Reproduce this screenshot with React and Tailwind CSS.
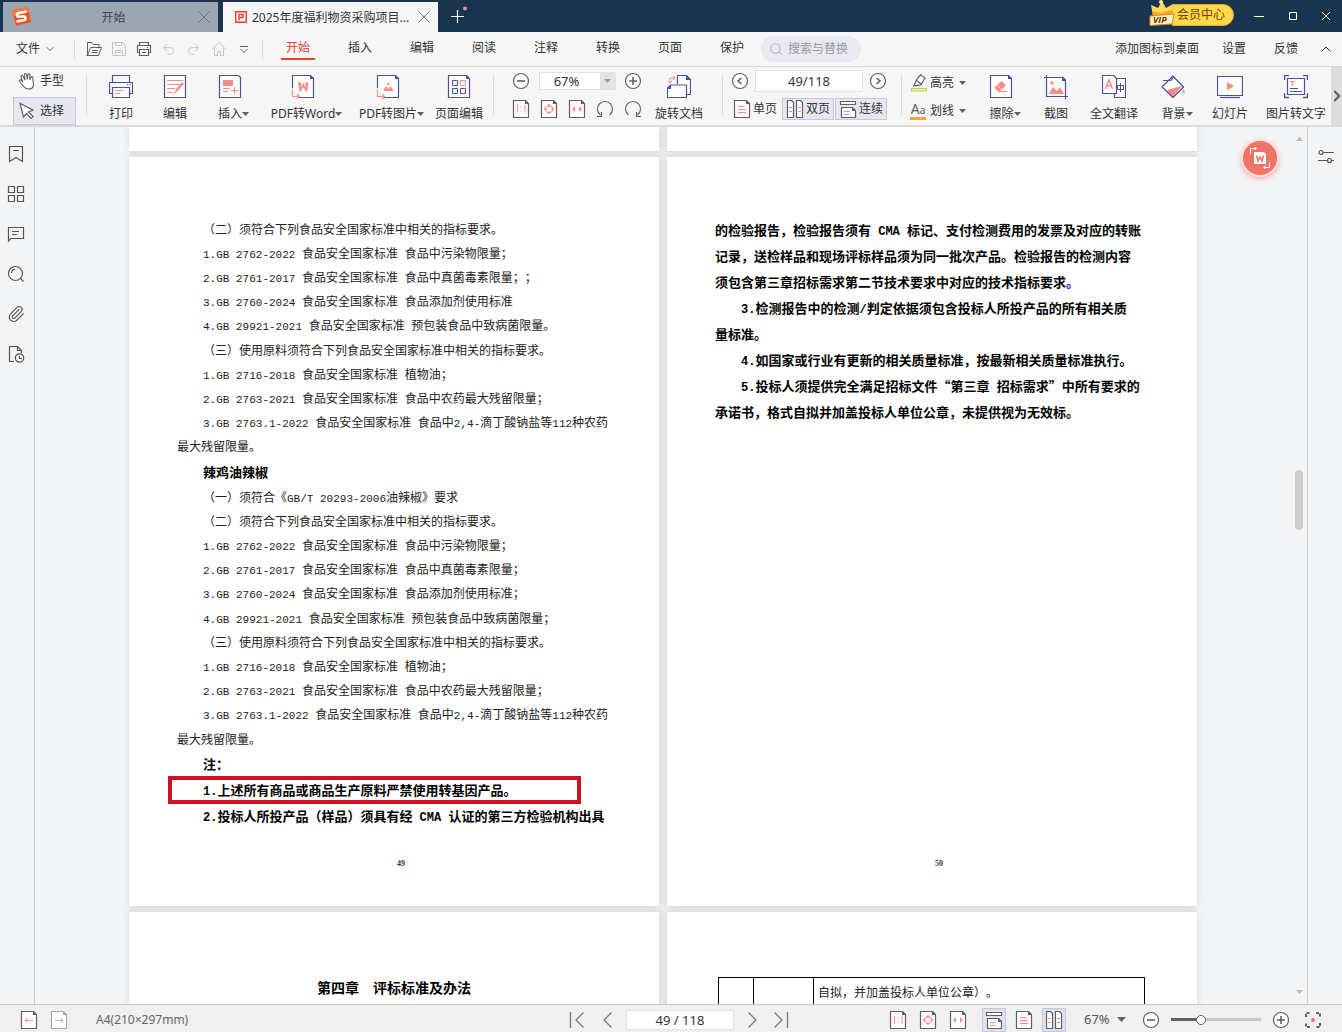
import { ChevronDown, ChevronUp, ChevronRight, Undo2, Redo2, House, Search, Paperclip } from 'lucide-react';
import clsx from 'clsx';

const INDIGO = '#4a5399';
const CORAL = '#ff8a84';
const GRAY = '#606060';

function Icon({ size = 24, className, children, ...props }) {
  return (
    <svg
      width={size}
      height={size}
      viewBox={`0 0 ${size} ${size}`}
      fill="none"
      stroke={INDIGO}
      aria-hidden="true"
      className={clsx('shrink-0', className)}
      {...props}
    >
      {children}
    </svg>
  );
}

function Caret({ className = 'text-[#606060]' }) {
  return (
    <svg width="7" height="4" viewBox="0 0 7 4" fill="currentColor" aria-hidden="true" className={clsx('shrink-0', className)}>
      <path d="M0 0h7L3.5 4z" />
    </svg>
  );
}

function Separator({ className }) {
  return <div className={clsx('w-px shrink-0 bg-[#dcdcdc]', className)} />;
}

/* ---------- big ribbon icons ---------- */

const PrintIcon = () => (
  <Icon>
    <path d="M3.5 7.5V.5h17v7M3.5 18.5H.5v-11h23v11h-3" strokeWidth="1.2" />
    <path d="M3.5 12.5h17v10h-17z" fill="#fff" strokeWidth="1.2" />
    <path d="M6 15.5h8M6 18.5h5" stroke={CORAL} />
    <path d="M18 9.5h1M20.5 9.5h1" />
  </Icon>
);

const EditIcon = () => (
  <Icon>
    <path d="M1.5.5h21v22h-21z" fill="#fff" strokeWidth="1.2" />
    <path d="M4 5.5h16M4 9.5h13M4 13.5h8M4 17.5h5" stroke={CORAL} strokeWidth="1.2" />
    <path d="M20 8l-7 8" stroke={CORAL} strokeWidth="2.4" />
    <path d="M10.5 19l1-3 2 1.5z" fill={CORAL} stroke="none" />
  </Icon>
);

const InsertIcon = () => (
  <Icon>
    <path d="M1.5.5h19l2 2v20h-21z" fill="#fff" strokeWidth="1.2" />
    <path d="M5 5h10v6H5z" fill={CORAL} stroke="none" />
    <path d="M5 13.5h7M5 16.5h5M13 15.5h7M16.5 12v7" stroke={CORAL} />
  </Icon>
);

const PdfPage = ({ children }) => (
  <Icon>
    <path d="M1.5 13V.5h18l3 3v19H8" fill="#fff" strokeWidth="1.2" />
    <path d="M19 0v4h4z" fill={INDIGO} stroke="none" />
    <path d="M1.5 15v6.5h6M6 19l2.5 2.500L6 24" stroke={CORAL} strokeWidth="1.2" />
    {children}
  </Icon>
);

const ToWordIcon = () => (
  <PdfPage>
    <path d="M7 8.5h3.500M14 8.5h3.500M8.500 9l.8 6 3-5 3 5 .8-6" stroke={CORAL} strokeWidth="2" />
  </PdfPage>
);

const ToImageIcon = () => (
  <PdfPage>
    <path d="M7 16l3-5 2.500 3 2-3 3.500 5z" fill={CORAL} stroke="none" />
    <circle cx="12.5" cy="9" r="1.3" fill={CORAL} stroke="none" />
  </PdfPage>
);

const PageEditIcon = () => (
  <Icon>
    <path d="M1.5.5h18l3 3v19h-21z" fill="#fff" strokeWidth="1.2" />
    <path d="M19 0v4h4z" fill={INDIGO} stroke="none" />
    <path d="M5.5 5.500h5v5h-5zM5.500 13.500h5v5h-5zM13.500 13.500h5v5h-5z" />
    <path d="M13.5 5.500h5v5h-5z" stroke={CORAL} />
  </Icon>
);

const RotateDocIcon = () => (
  <Icon>
    <path d="M10.5 9V.5h9l4 4v15h-4" fill="#fff" strokeWidth="1.2" />
    <path d="M19 0v5h5z" fill={INDIGO} stroke="none" />
    <path d="M.5 13l3-3h16v12.500H.5z" fill="#fff" strokeWidth="1.2" />
    <path d="M0 14l4-4v4z" fill={INDIGO} stroke="none" />
    <path d="M3 8V3h5M1 6l2 2 2-2M6 1l2 2-2 2" stroke={CORAL} />
  </Icon>
);

const EraseIcon = () => (
  <Icon>
    <path d="M1.5.5h18l3 3v19h-21z" fill="#fff" strokeWidth="1.2" />
    <path d="M19 0v4h4z" fill={INDIGO} stroke="none" />
    <path d="M6 12l6.500-6 4.500 4.500-6.500 6H9l-3-3z" fill={CORAL} stroke="none" />
    <path d="M9 11l3.500 3.500" stroke="#fff" />
    <path d="M9 16.500h9" stroke={CORAL} />
  </Icon>
);

const CropIcon = () => (
  <Icon>
    <path d="M3.5 3.500h15l2 2v15h-17z" fill="#fff" stroke="none" />
    <path d="M0 2.500h19l2.500 2.500M2.500 0v21.500H24M21.500 4v20" strokeWidth="1.2" />
    <path d="M18 2v4h4z" fill={INDIGO} stroke="none" />
    <path d="M5 19l4-7 4 4 3-4 4 7z" fill={CORAL} stroke="none" />
    <circle cx="8" cy="8" r="1.8" fill={CORAL} stroke="none" />
  </Icon>
);

const TranslateIcon = () => (
  <Icon>
    <path d="M12.5 3.500h11v19h-11z" fill="#fff" strokeWidth="1.2" />
    <path d="M.5.5h11l3 3v15H.5z" fill="#fff" strokeWidth="1.2" />
    <path d="M3.5 14L7 4.500l3.500 9.500M5 11h4.500" stroke={CORAL} strokeWidth="1.4" />
    <path d="M15.5 10.500h6v4h-6zM18.500 8v9" />
  </Icon>
);

const BackgroundIcon = () => (
  <Icon>
    <path d="M12 1L1 12l11 10.500L22.500 12z" fill="#fff" />
    <path d="M6 15l15-4-9.500 11z" fill={CORAL} stroke="none" />
    <path d="M12 1L1 12l11 10.500L22.500 12zM2 5.500h8M10 5.500l3-4" strokeWidth="1.2" />
    <path d="M22.500 14c2 3 1 4 0 4s-1.500-1 0-4z" fill={CORAL} stroke="none" />
  </Icon>
);

const SlideIcon = () => (
  <Icon size={26}>
    <path d="M.5 2.500h25v19H.5z" fill="#fff" strokeWidth="1.2" />
    <path d="M10 8l7 4-7 4.500z" fill={CORAL} stroke="none" />
    <path d="M3 23.500h20" strokeWidth="1.2" />
  </Icon>
);

const OcrIcon = () => (
  <Icon>
    <path d="M.5 5V.5H5M19 .5h4.500V5M23.500 18v4.500H19M5 22.500H.5V18" strokeWidth="1.4" />
    <path d="M3.5 3.500h17v16h-17z" fill="#fff" strokeWidth="1.2" />
    <path d="M6 6.500h5M8.500 6.500V11" stroke={CORAL} strokeWidth="1.2" />
    <path d="M6 13.500h8M6 16.500h12" />
  </Icon>
);

/* ---------- small page icons ---------- */

function PageIcon({ muted, children }) {
  const line = muted ? '#a8a8a8' : GRAY;
  return (
    <Icon size={18} stroke={line}>
      <path d="M1.5.5h12l3 3v14h-15z" fill="#fff" strokeWidth="1.2" />
      <path d="M13 0v4h4z" fill={line} stroke="none" />
      {children}
    </Icon>
  );
}

const ActualSizeIcon = () => (
  <PageIcon>
    <path d="M4.5 6.500l1-1v7M12 6.500l1-1v7M9 7v1M9 10.500v1" stroke={CORAL} />
  </PageIcon>
);

const FitPageIcon = () => (
  <PageIcon>
    <path d="M9 3.500L11 6H7zM9 14.500L7 12h4zM3.500 9L6 7v4zM14.500 9L12 11V7z" fill={CORAL} stroke="none" />
    <path d="M6 6.500h6v5.500H6z" stroke={CORAL} strokeWidth=".8" />
  </PageIcon>
);

const FitWidthIcon = () => (
  <PageIcon>
    <path d="M4 9l3-3v6zM14 9l-3-3v6z" fill={CORAL} stroke="none" />
  </PageIcon>
);

const SinglePageIcon = () => (
  <PageIcon>
    <path d="M5 6.500h6M5 9.500h8M5 12.500h8" stroke={CORAL} />
  </PageIcon>
);

const DoublePageIcon = () => (
  <Icon size={18} stroke={GRAY} strokeWidth="1.2">
    <path d="M1.5.5h4l2 2v15h-6zM10.500.5h4l2 2v15h-6z" fill="#fff" />
    <path d="M3 7.500h3M3 11.500h3M12 7.500h3M12 11.500h3" stroke={CORAL} />
  </Icon>
);

const ContinuousIcon = () => (
  <Icon size={18} stroke={GRAY} strokeWidth="1.2">
    <path d="M1.5 1.500h15v3h-15z" fill="#fff" />
    <path d="M2.500 17.500v-10h11l3 3v7z" fill="#fff" />
    <path d="M13 7v4h4z" fill={GRAY} stroke="none" />
    <path d="M5 11.500h6M5 14.500h5" stroke={CORAL} />
  </Icon>
);

const RotateIcon = ({ className }) => (
  <Icon size={18} stroke={GRAY} className={className}>
    <path d="M4.500 15A7.500 7.500 0 1 1 13.500 15" strokeWidth="1.2" />
    <path d="M1 16.500h4.500V12" strokeWidth="1.2" />
  </Icon>
);

const CircleIcon = ({ d }) => (
  <Icon size={18} stroke={GRAY}>
    <circle cx="9" cy="9" r="7.5" fill="#fff" strokeWidth="1.2" />
    <path d={d} strokeWidth="1.6" />
  </Icon>
);

const MINUS = 'M5 9h8';
const PLUS = 'M5 9h8M9 5v8';

const HandIcon = () => (
  <Icon size={18} stroke={GRAY}>
    <path d="M6 15L1.500 9.500c-.8-1.500 1-2.300 2-1L5 10 3 5c-.4-1.500 1.500-2 2-.7L7 8 6.300 2.800c0-1.600 2-1.700 2.200-.2L9.300 7.500l.6-4.700c.3-1.400 2-1.200 2 .2L11.700 8l1.400-2.800c.8-1 2-.4 1.800.8-.6 3 1.500 5.500.5 8-.6 1.800-2.400 3.200-5 3-2 0-3.300-1-4.400-2z" fill="#fff" strokeWidth="1.1" />
  </Icon>
);

const CursorIcon = () => (
  <Icon size={18} stroke={GRAY}>
    <path d="M2 1.500l3.500 13.500 3-3.500 4.500 5 2-2-4.500-4.500L15 8z" fill="#fff" strokeWidth="1.2" />
  </Icon>
);

const HighlightIcon = () => (
  <Icon size={18} stroke={GRAY}>
    <path d="M10.500.8l4.500 3-4 7-5.500 1-1-1.500 2-4.500zM6.500 6.500l4.500 3.500M5 11l-2 1.500" fill="#fff" strokeWidth="1.1" />
    <path d="M1.500 14.500h15v2.500h-15z" fill="#ffff3c" stroke="#999" strokeWidth=".6" />
  </Icon>
);

/* ---------- ribbon ---------- */

function BigButton({ icon, label, width, menu }) {
  return (
    <button className={clsx('flex shrink-0 flex-col items-center pt-2', width)}>
      <span className={clsx('flex h-6 items-center', menu && 'mr-2')}>{icon}</span>
      <span className="mt-[7px] flex items-center whitespace-nowrap leading-4">
        {label}
        {menu && <Caret />}
      </span>
    </button>
  );
}

function IconButton({ label, className, children }) {
  return (
    <button aria-label={label} className={clsx('flex shrink-0 items-center justify-center', className)}>
      {children}
    </button>
  );
}

function ToggleButton({ icon, label, active }) {
  return (
    <button
      className={clsx(
        'flex h-[22px] items-center gap-0.5 border px-[3px] leading-4',
        active ? 'border-[#c5c6df] bg-[#e6e7f1]' : 'border-transparent'
      )}
    >
      {icon}
      {label}
    </button>
  );
}

function TitleBar() {
  return (
    <header className="flex h-8 shrink-0 bg-[#1a3450] pl-[3px] pt-0.5">
      <div className="flex w-[215px] items-center bg-[#9ca6b2] pl-2 pr-1 text-[#444]">
        <svg width="22" height="22" viewBox="0 0 22 22" aria-hidden="true">
          <path d="M1 4L17 1l3 15-15 4z" fill="#f4511e" />
          <path d="M1 4L17 1l1 5L2 10z" fill="#fb7a3c" />
          <path d="M15.500 5.500L8 7c-3 .7-2.500 4 0 3.700l4-.5c3-.3 3.200 3.500.5 4L5.500 15.500" fill="none" stroke="#fff" strokeWidth="2.6" />
        </svg>
        <button className="flex-1 pt-0.5">开始</button>
        <IconButton label="关闭开始" className="w-5">
          <Icon size={12} stroke="#6d7680"><path d="M.5.5l11 11M11.500.5l-11 11" /></Icon>
        </IconButton>
      </div>
      <div className="ml-[5px] flex w-[215px] items-center bg-[#f6f6f6] pl-3 text-[#333]">
        <Icon size={12} stroke="#e8412f" strokeWidth="1.4">
          <path d="M.7.7h10.600v10.600H.7zM4 9.500v-6h4v3H4" />
        </Icon>
        <button className="ml-[5px] whitespace-nowrap pt-0.5">2025年度福利物资采购项目...</button>
        <IconButton label="关闭文档" className="ml-auto w-7">
          <Icon size={12} stroke="#777"><path d="M.5.5l11 11M11.500.5l-11 11" /></Icon>
        </IconButton>
      </div>
      <IconButton label="新建标签" className="ml-3 w-[18px] pb-1">
        <Icon size={18} stroke="#fff">
          <path d="M1 10.500h13M7.500 4v13" strokeWidth="1.2" />
          <circle cx="15" cy="2.5" r="2" fill={CORAL} stroke="none" />
        </Icon>
      </IconButton>
      <button className="-mt-0.5 ml-auto flex h-[26px] items-end text-[#7a3b00]">
        <svg width="28" height="26" viewBox="0 0 28 26" className="z-10 -mr-1" aria-hidden="true">
          <path d="M5 16L3 5l7 3 4-7 4 7 7-4-1 12z" fill="#ffd75a" />
          <path d="M5 16L4 11l9 2 11-3v6z" fill="#f3a82c" />
          <circle cx="13" cy="2" r="2" fill="#ffe9a0" />
          <path d="M2 16l24-2-2 10-22 1.500z" fill="#fff0c0" stroke="#d98a1c" />
          <text x="5" y="23" fontSize="9" fontWeight="700" fontStyle="italic" fontFamily="Open Sans" fill="#7a2d00">VIP</text>
        </svg>
        <span className="flex h-[22px] items-center rounded-r-full border border-[#e9ae25] bg-[#ffd84c] pl-1 pr-2">会员中心</span>
      </button>
      <div className="ml-2 flex">
        <IconButton label="最小化" className="w-[34px]">
          <Icon size={12} stroke="#fff"><path d="M1 5.500h10" /></Icon>
        </IconButton>
        <IconButton label="最大化" className="w-[34px]">
          <Icon size={12} stroke="#fff"><path d="M2.500 1.500h7v7h-7z" /></Icon>
        </IconButton>
        <IconButton label="关闭" className="w-8">
          <Icon size={12} stroke="#fff"><path d="M2 1l8 8M10 1L2 9" /></Icon>
        </IconButton>
      </div>
    </header>
  );
}

const MENU = ['开始', '插入', '编辑', '阅读', '注释', '转换', '页面', '保护'];

function MenuBar() {
  return (
    <nav className="flex h-[34px] shrink-0 items-center bg-[#f6f6f6]">
      <button className="ml-4 flex items-center gap-1">
        文件 <ChevronDown className="size-3" strokeWidth={1.5} />
      </button>
      <Separator className="ml-[18px] h-5" />
      <div className="ml-1.5 flex text-[#606060]">
        <IconButton label="打开" className="w-[25px]">
          <Icon size={16} stroke={GRAY}>
            <path d="M1.500 14V1.500H6L7.500 3.500h5.500V6M.5 14.500h12l3-8h-11l-3 8M6 9.500h6M5.500 11.500h6" />
          </Icon>
        </IconButton>
        <IconButton label="保存" className="w-[25px]">
          <Icon size={16} stroke="#c6c6c6">
            <path d="M1.500 1.500h10l3 3v10h-13zM4.500 1.500v3h6v-3M4.500 14V9.500h7V14M6 11.500h4" />
          </Icon>
        </IconButton>
        <IconButton label="打印" className="w-[25px]">
          <Icon size={16} stroke={GRAY} strokeWidth="1.2">
            <path d="M3.500 4.500v-3h9v3M3.500 11.500h-2v-7h13v7h-2M3.500 8.500h9v6h-9zM6 11.500h4M11 6.500h1" />
          </Icon>
        </IconButton>
        <IconButton label="撤销" className="w-[25px]"><Undo2 className="size-[15px] text-[#c6c6c6]" strokeWidth={1.5} /></IconButton>
        <IconButton label="重做" className="w-[25px]"><Redo2 className="size-[15px] text-[#c6c6c6]" strokeWidth={1.5} /></IconButton>
        <IconButton label="主页" className="w-[25px]">
          <Icon size={16} stroke="#c6c6c6">
            <path d="M1 8.500L8 1.500l7 7M3.500 7v7.500h3v-4h3v4h3V7" />
          </Icon>
        </IconButton>
        <IconButton label="更多" className="w-[25px]">
          <Icon size={10} stroke={GRAY}><path d="M1 2.500h8M1.500 5L5 8.500 8.500 5" /></Icon>
        </IconButton>
      </div>
      <Separator className="ml-1.5 h-5" />
      <div className="ml-1 flex">
        {MENU.map((name, i) => (
          <button
            key={name}
            className={clsx('flex w-[62px] flex-col items-center leading-5', i === 0 && 'text-[#e8412f]')}
          >
            {name}
            <span className={clsx('h-0.5 w-[34px]', i === 0 ? 'bg-[#e8412f]' : 'bg-transparent')} />
          </button>
        ))}
      </div>
      <label className="-ml-0.5 flex h-[26px] w-[100px] items-center rounded-full bg-[#e8e9f2] pl-2 text-[#999]">
        <Search className="size-3.5 shrink-0 text-[#bbb]" strokeWidth={2} />
        <input aria-label="搜索与替换" placeholder="搜索与替换" className="ml-[5px] w-[68px] bg-transparent outline-none placeholder:text-[#999]" />
      </label>
      <div className="ml-auto flex items-center">
        <button>添加图标到桌面</button>
        <button className="ml-[23px]">设置</button>
        <button className="ml-7">反馈</button>
        <IconButton label="收起功能区" className="ml-5 mr-2 w-4"><ChevronUp className="size-4" strokeWidth={1.5} /></IconButton>
      </div>
    </nav>
  );
}

function Ribbon() {
  return (
    <section className="flex h-[61px] shrink-0 border-b-2 border-t border-b-[#dadada] border-t-[#d9d9d9] bg-[#f6f6f6]">
      <div className="ml-[13px] mr-2.5 flex w-[63px] flex-col gap-0.5">
        <button className="flex h-7 items-center gap-1 pl-[5px]"><HandIcon />手型</button>
        <button className="flex h-7 items-center gap-1 border border-[#c5c6df] bg-[#e6e7f1] pl-1"><CursorIcon />选择</button>
      </div>
      <Separator className="mr-[7px] mt-2 h-10" />
      <BigButton width="w-[54px]" icon={<PrintIcon />} label="打印" />
      <BigButton width="w-[54px]" icon={<EditIcon />} label="编辑" />
      <BigButton width="w-[63px]" icon={<InsertIcon />} label="插入" menu />
      <BigButton width="w-[83px]" icon={<ToWordIcon />} label="PDF转Word" menu />
      <BigButton width="w-[87px]" icon={<ToImageIcon />} label="PDF转图片" menu />
      <BigButton width="w-[48px]" icon={<PageEditIcon />} label="页面编辑" />
      <Separator className="ml-2.5 mr-[18px] mt-2 h-10" />

      <div className="flex w-[130px] shrink-0 flex-col gap-2.5 pt-[5px]">
        <div className="flex items-center justify-between">
          <IconButton label="缩小" className="w-[18px]"><CircleIcon d={MINUS} /></IconButton>
          <div className="flex h-[18px] items-stretch border border-[#e2e2e2]">
            <select aria-label="缩放比例" defaultValue="67%" className="w-[60px] appearance-none bg-white pr-1.5 text-center text-[13px] leading-4 outline-none">
              <option>67%</option>
              <option>100%</option>
            </select>
            <span className="flex w-[15px] items-center justify-center bg-[#e2e2e2]"><Caret className="text-[#999]" /></span>
          </div>
          <IconButton label="放大" className="w-[18px]"><CircleIcon d={PLUS} /></IconButton>
        </div>
        <div className="flex items-center justify-between">
          <IconButton label="实际大小"><ActualSizeIcon /></IconButton>
          <IconButton label="适合页面"><FitPageIcon /></IconButton>
          <IconButton label="适合宽度"><FitWidthIcon /></IconButton>
          <IconButton label="向左旋转"><RotateIcon /></IconButton>
          <IconButton label="向右旋转"><RotateIcon className="-scale-x-100" /></IconButton>
        </div>
      </div>
      <BigButton width="ml-[13px] w-[48px]" icon={<RotateDocIcon />} label="旋转文档" />
      <Separator className="ml-[19px] mt-2 h-10" />

      <div className="ml-2 flex w-[156px] shrink-0 flex-col gap-1.5 pt-[3px]">
        <div className="flex items-center justify-between">
          <IconButton label="上一页"><CircleIcon d="M10.500 6L7 9l3.500 3" /></IconButton>
          <input aria-label="页码" defaultValue="49/118" className="h-[22px] w-[108px] border border-[#e2e2e2] bg-white text-center text-[13px] outline-none" />
          <IconButton label="下一页"><CircleIcon d="M7.500 6L11 9l-3.500 3" /></IconButton>
        </div>
        <div className="-ml-0.5 flex justify-between">
          <ToggleButton icon={<SinglePageIcon />} label="单页" />
          <ToggleButton icon={<DoublePageIcon />} label="双页" active />
          <ToggleButton icon={<ContinuousIcon />} label="连续" active />
        </div>
      </div>
      <Separator className="ml-3.5 mt-2 h-10" />

      <div className="ml-2 flex w-[65px] shrink-0 flex-col gap-2 pt-1.5">
        <button className="flex h-5 items-center"><HighlightIcon /><span className="ml-0.5 mr-[5px]">高亮</span><Caret /></button>
        <button className="flex h-5 items-center">
          <span className="mr-1 w-4 border-b-[3px] border-[#f9a13a] text-[14px] leading-[14px] text-[#606060]" aria-hidden="true">
            A<span className="text-[10px]">a</span>
          </span>
          <span className="mr-[5px]">划线</span><Caret />
        </button>
      </div>
      <BigButton width="w-[60px]" icon={<EraseIcon />} label="擦除" menu />
      <BigButton width="w-[42px]" icon={<CropIcon />} label="截图" />
      <BigButton width="w-[74px]" icon={<TranslateIcon />} label="全文翻译" />
      <BigButton width="w-[52px]" icon={<BackgroundIcon />} label="背景" menu />
      <BigButton width="w-[54px]" icon={<SlideIcon />} label="幻灯片" />
      <BigButton width="ml-1 w-[70px]" icon={<OcrIcon />} label="图片转文字" />
      <IconButton label="更多功能" className="ml-auto w-[11px] shrink bg-[#dcdcdc]">
        <ChevronRight className="size-[18px] shrink-0 text-[#555]" strokeWidth={2.5} />
      </IconButton>
    </section>
  );
}

/* ---------- side bars ---------- */

function LeftBar() {
  return (
    <aside className="flex w-[35px] shrink-0 flex-col items-center gap-[22px] border-r border-[#c8cacc] pr-[3px] pt-[18px]">
      <IconButton label="书签">
        <Icon size={18} stroke="#555" strokeWidth="1.2"><path d="M2.500 1.500h13v15L9 12.500l-6.500 4zM6 5.500h6" /></Icon>
      </IconButton>
      <IconButton label="缩略图">
        <Icon size={18} stroke="#555" strokeWidth="1.2"><path d="M1.500 1.500h6v6h-6zM10.500 1.500h6v6h-6zM1.500 10.500h6v6h-6zM10.500 10.500h6v6h-6z" /></Icon>
      </IconButton>
      <IconButton label="批注">
        <Icon size={18} stroke="#555" strokeWidth="1.2"><path d="M1.500 2.500h15v11H4l-2.500 2.500zM5 6.500h7M5 9.500h5" /></Icon>
      </IconButton>
      <IconButton label="查找">
        <Icon size={18} stroke="#555" strokeWidth="1.2"><circle cx="8.5" cy="8.5" r="7" /><path d="M13.500 13.500l3 3M4.500 8c0-2 1-3.500 3.500-4" /></Icon>
      </IconButton>
      <IconButton label="附件"><Paperclip className="size-[18px] text-[#555]" strokeWidth={1.5} /></IconButton>
      <IconButton label="历史">
        <Icon size={18} stroke="#555" strokeWidth="1.2">
          <path d="M7 16.500H2.500v-15h8l4 4V8M10.500 1.500v4h4" />
          <circle cx="12.5" cy="13" r="4.2" />
          <path d="M12.500 11v2.500H15" />
        </Icon>
      </IconButton>
    </aside>
  );
}

function ScrollBar() {
  return (
    <div className="flex w-4 shrink-0 flex-col items-center pb-2.5 pt-2.5 text-[#b8b8b8]">
      <Caret className="rotate-180 text-[#b8b8b8]" />
      <div className="flex-[328]" />
      <div className="h-[60px] w-2 rounded-full bg-[#cdcdcd]" />
      <div className="flex-[458]" />
      <Caret className="text-[#b8b8b8]" />
    </div>
  );
}

/* ---------- document ---------- */

// half-width runs are set in the mono face, about half the CJK advance
function Mixed({ text, bold }) {
  return text.split(/([\x20-\x7e]+)/).map((part, i) =>
    i % 2 ? (
      <span key={i} className={clsx('whitespace-pre font-["Liberation_Mono",monospace] leading-none', bold ? 'text-[12px]' : 'text-[11px]')}>
        {part}
      </span>
    ) : (
      part
    )
  );
}

function Line({ children, flush, gap }) {
  return (
    <p className={clsx('h-6 whitespace-nowrap text-[12px] leading-6 text-[#222]', !flush && 'pl-[26px]', gap && 'mt-px')}>
      <Mixed text={children} />
    </p>
  );
}

function BoldLine({ children, flush, gap }) {
  return (
    <p className={clsx('h-[26px] whitespace-nowrap text-[13px] font-bold leading-[26px] text-black', !flush && 'pl-[26px]', gap && 'mt-px')}>
      <Mixed text={children} bold />
    </p>
  );
}

function Page({ className, children }) {
  return (
    <article
      className={clsx(
        'w-[530px] shrink-0 bg-white px-12 font-["Noto_Sans_CJK_SC",sans-serif] shadow-[0_0_8px_rgba(0,0,0,0.1)] [text-spacing-trim:space-all]',
        className
      )}
    >
      {children}
    </article>
  );
}

function PageNumber({ children, className }) {
  return (
    <p className={clsx('pl-3.5 text-center font-["Liberation_Serif",serif] text-[8px] font-bold leading-3 text-[#1f3864]', className)}>
      {children}
    </p>
  );
}

function Page49() {
  return (
    <Page className="h-[749px] pt-[60px]">
      <Line>（二）须符合下列食品安全国家标准中相关的指标要求。</Line>
      <Line>1.GB 2762-2022 食品安全国家标准 食品中污染物限量；</Line>
      <Line>2.GB 2761-2017 食品安全国家标准 食品中真菌毒素限量；；</Line>
      <Line>3.GB 2760-2024 食品安全国家标准 食品添加剂使用标准</Line>
      <Line>4.GB 29921-2021 食品安全国家标准 预包装食品中致病菌限量。</Line>
      <Line gap>（三）使用原料须符合下列食品安全国家标准中相关的指标要求。</Line>
      <Line>1.GB 2716-2018 食品安全国家标准 植物油；</Line>
      <Line>2.GB 2763-2021 食品安全国家标准 食品中农药最大残留限量；</Line>
      <Line>3.GB 2763.1-2022 食品安全国家标准 食品中2,4-滴丁酸钠盐等112种农药</Line>
      <Line flush>最大残留限量。</Line>
      <BoldLine gap>辣鸡油辣椒</BoldLine>
      <Line>（一）须符合《GB/T 20293-2006油辣椒》要求</Line>
      <Line>（二）须符合下列食品安全国家标准中相关的指标要求。</Line>
      <Line>1.GB 2762-2022 食品安全国家标准 食品中污染物限量；</Line>
      <Line>2.GB 2761-2017 食品安全国家标准 食品中真菌毒素限量；</Line>
      <Line>3.GB 2760-2024 食品安全国家标准 食品添加剂使用标准；</Line>
      <Line gap>4.GB 29921-2021 食品安全国家标准 预包装食品中致病菌限量；</Line>
      <Line>（三）使用原料须符合下列食品安全国家标准中相关的指标要求。</Line>
      <Line>1.GB 2716-2018 食品安全国家标准 植物油；</Line>
      <Line>2.GB 2763-2021 食品安全国家标准 食品中农药最大残留限量；</Line>
      <Line>3.GB 2763.1-2022 食品安全国家标准 食品中2,4-滴丁酸钠盐等112种农药</Line>
      <Line flush gap>最大残留限量。</Line>
      <BoldLine>注：</BoldLine>
      <div className="relative">
        <BoldLine>1.上述所有商品或商品生产原料严禁使用转基因产品。</BoldLine>
        <div className="absolute -left-[9px] -top-px h-7 w-[413px] border-4 border-[#cc1122]" />
      </div>
      <BoldLine>2.投标人所投产品（样品）须具有经 CMA 认证的第三方检验机构出具</BoldLine>
      <PageNumber className="mt-[29px]">49</PageNumber>
    </Page>
  );
}

function Page50() {
  return (
    <Page className="flex h-[749px] flex-col pb-9 pt-[60px]">
      <BoldLine flush>的检验报告，检验报告须有 CMA 标记、支付检测费用的发票及对应的转账</BoldLine>
      <BoldLine flush>记录，送检样品和现场评标样品须为同一批次产品。检验报告的检测内容</BoldLine>
      <p className="h-[26px] whitespace-nowrap text-[13px] font-bold leading-[26px] text-black">
        须包含第三章招标需求第二节技术要求中对应的技术指标要求<span className="text-[#0000ff]">。</span>
      </p>
      <BoldLine>3.检测报告中的检测/判定依据须包含投标人所投产品的所有相关质</BoldLine>
      <BoldLine flush>量标准。</BoldLine>
      <BoldLine>4.如国家或行业有更新的相关质量标准，按最新相关质量标准执行。</BoldLine>
      <BoldLine>5.投标人须提供完全满足招标文件“第三章 招标需求”中所有要求的</BoldLine>
      <BoldLine flush>承诺书，格式自拟并加盖投标人单位公章，未提供视为无效标。</BoldLine>
      <PageNumber className="mt-auto">50</PageNumber>
    </Page>
  );
}

function Viewer() {
  return (
    <main className="relative flex min-w-0 flex-1 justify-end bg-[#f3f4f6]">
      <div className="flex min-w-0 flex-1 flex-col items-center overflow-hidden">
        <div className="flex flex-col gap-1.5 bg-[#eceeee]">
          <div className="flex gap-2">
            <Page className="h-6" />
            <Page className="h-6" />
          </div>
          <div className="flex gap-2">
            <Page49 />
            <Page50 />
          </div>
          <div className="flex gap-2">
            <Page className="h-[749px] pt-[62px]">
              <h2 className="text-center text-[14px] font-bold leading-[26px] text-black">第四章　评标标准及办法</h2>
            </Page>
            <Page className="h-[749px] pt-[65px]">
              <table className="ml-[3px] w-[427px] table-fixed border-collapse text-[12px] leading-6 text-[#222]">
                <tbody>
                  <tr className="h-20 align-top">
                    <td className="w-[35px] border border-black" />
                    <td className="w-[60px] border border-black" />
                    <td className="border border-black pl-1 pt-0.5">自拟，并加盖投标人单位公章）。</td>
                  </tr>
                </tbody>
              </table>
            </Page>
          </div>
        </div>
      </div>
      <ScrollBar />
      <button
        aria-label="PDF转Word"
        className="absolute right-7 top-3 flex size-[38px] items-center justify-center rounded-full border-2 border-[#ffdedb] bg-[#ef7468] shadow-[0_2px_4px_rgba(239,116,104,0.5)]"
      >
        <Icon size={22} stroke="#fff">
          <path d="M1.500 7V1.500H7M5.500 0l2 1.500-2 1.500M20.500 15v5.500H15M16.500 19l-2 1.500 2 1.500" />
          <path d="M5 5h10l2 2v10H5z" fill="#fff" stroke="none" />
          <path d="M7.500 8.500l1.500 5.500 2-4 2 4 1.500-5.500" stroke="#ef7468" strokeWidth="1.6" />
        </Icon>
      </button>
    </main>
  );
}

/* ---------- status bar ---------- */

function NavIcon({ d }) {
  return <Icon size={18} stroke="#777" strokeWidth="1.3"><path d={d} /></Icon>;
}

function StatusBar() {
  return (
    <footer className="flex h-7 shrink-0 items-center border-t border-[#c8c8c8] bg-[#f0f0f0] pt-0.5 text-[#555]">
      <div className="flex flex-1 items-center pl-5">
        <IconButton label="后退">
          <PageIcon><path d="M13 9.500H5M7.500 7L5 9.500 7.500 12" stroke={CORAL} /></PageIcon>
        </IconButton>
        <IconButton label="前进" className="ml-3">
          <PageIcon muted><path d="M5 9.500h8M10.500 7L13 9.500 10.500 12" stroke="#b8b8b8" /></PageIcon>
        </IconButton>
        <span className="ml-7 text-[12px] text-[#666]">A4(210×297mm)</span>
      </div>
      <div className="flex items-center pl-4">
        <IconButton label="第一页"><NavIcon d="M2.500 1v16M15.500 1.500L8 9l7.500 7.500" /></IconButton>
        <IconButton label="上一页" className="ml-3.5"><NavIcon d="M11.500 1.500L4 9l7.500 7.500" /></IconButton>
        <input aria-label="当前页" defaultValue="49 / 118" className="ml-2 h-5 w-[108px] border border-[#e0e0e0] bg-white text-center text-[13px] leading-4 text-[#333] outline-none" />
        <IconButton label="下一页" className="ml-2"><NavIcon d="M6.500 1.500L14 9l-7.500 7.500" /></IconButton>
        <IconButton label="最后一页" className="ml-3"><NavIcon d="M2.500 1.500L10 9l-7.500 7.500M15.500 1v16" /></IconButton>
      </div>
      <div className="flex flex-1 items-center justify-end pr-5">
        <IconButton label="实际大小" className="mr-3"><ActualSizeIcon /></IconButton>
        <IconButton label="适合页面" className="mr-3"><FitPageIcon /></IconButton>
        <IconButton label="适合宽度" className="mr-[15px]"><FitWidthIcon /></IconButton>
        <IconButton label="连续" className="h-6 w-6 border border-[#c5c6df] bg-[#e1e2ef]"><ContinuousIcon /></IconButton>
        <IconButton label="单页" className="mx-[9px]"><SinglePageIcon /></IconButton>
        <IconButton label="双页" className="h-6 w-6 border border-[#c5c6df] bg-[#e1e2ef]"><DoublePageIcon /></IconButton>
        <select aria-label="缩放" defaultValue="67%" className="ml-[18px] w-[33px] appearance-none bg-transparent text-[13px] outline-none">
          <option>67%</option>
          <option>100%</option>
        </select>
        <svg width="9" height="5" viewBox="0 0 9 5" fill="#606060" aria-hidden="true"><path d="M0 0h9L4.500 5z" /></svg>
        <IconButton label="缩小" className="ml-4"><CircleIcon d={MINUS} /></IconButton>
        <input
          type="range"
          aria-label="缩放滑块"
          defaultValue="31"
          className="mx-[11px] h-[3px] w-[90px] appearance-none bg-[linear-gradient(to_right,#606060_33%,#c8c8c8_33%)] [&::-webkit-slider-thumb]:size-[10px] [&::-webkit-slider-thumb]:appearance-none [&::-webkit-slider-thumb]:rounded-full [&::-webkit-slider-thumb]:border [&::-webkit-slider-thumb]:border-[#606060] [&::-webkit-slider-thumb]:bg-white"
        />
        <IconButton label="放大"><CircleIcon d={PLUS} /></IconButton>
        <IconButton label="全屏" className="ml-3.5">
          <Icon size={18} stroke={GRAY} strokeWidth="2">
            <path d="M2 6V2h4M12 2h4v4M16 12v4h-4M6 16H2v-4" strokeDasharray="3 1.5" />
            <circle cx="9" cy="9" r="2" fill="#ff6f68" stroke="none" />
          </Icon>
        </IconButton>
      </div>
    </footer>
  );
}

export default function App() {
  return (
    <div className='flex h-screen flex-col overflow-hidden bg-[#f3f4f6] font-["Noto_Sans","Noto_Sans_CJK_SC",sans-serif] text-[12px] text-[#333]'>
      <TitleBar />
      <MenuBar />
      <Ribbon />
      <div className="flex min-h-0 flex-1">
        <LeftBar />
        <Viewer />
        <aside className="w-[35px] shrink-0 border-l border-[#c8cacc] pl-[9px] pt-5">
          <IconButton label="属性">
            <Icon size={18} stroke="#555" strokeWidth="1.2">
              <circle cx="4" cy="5.5" r="2" />
              <path d="M6.500 5.500H17M1 13.500h9.500M14.500 13.500H17" />
              <circle cx="12.5" cy="13.5" r="2" />
            </Icon>
          </IconButton>
        </aside>
      </div>
      <StatusBar />
    </div>
  );
}
